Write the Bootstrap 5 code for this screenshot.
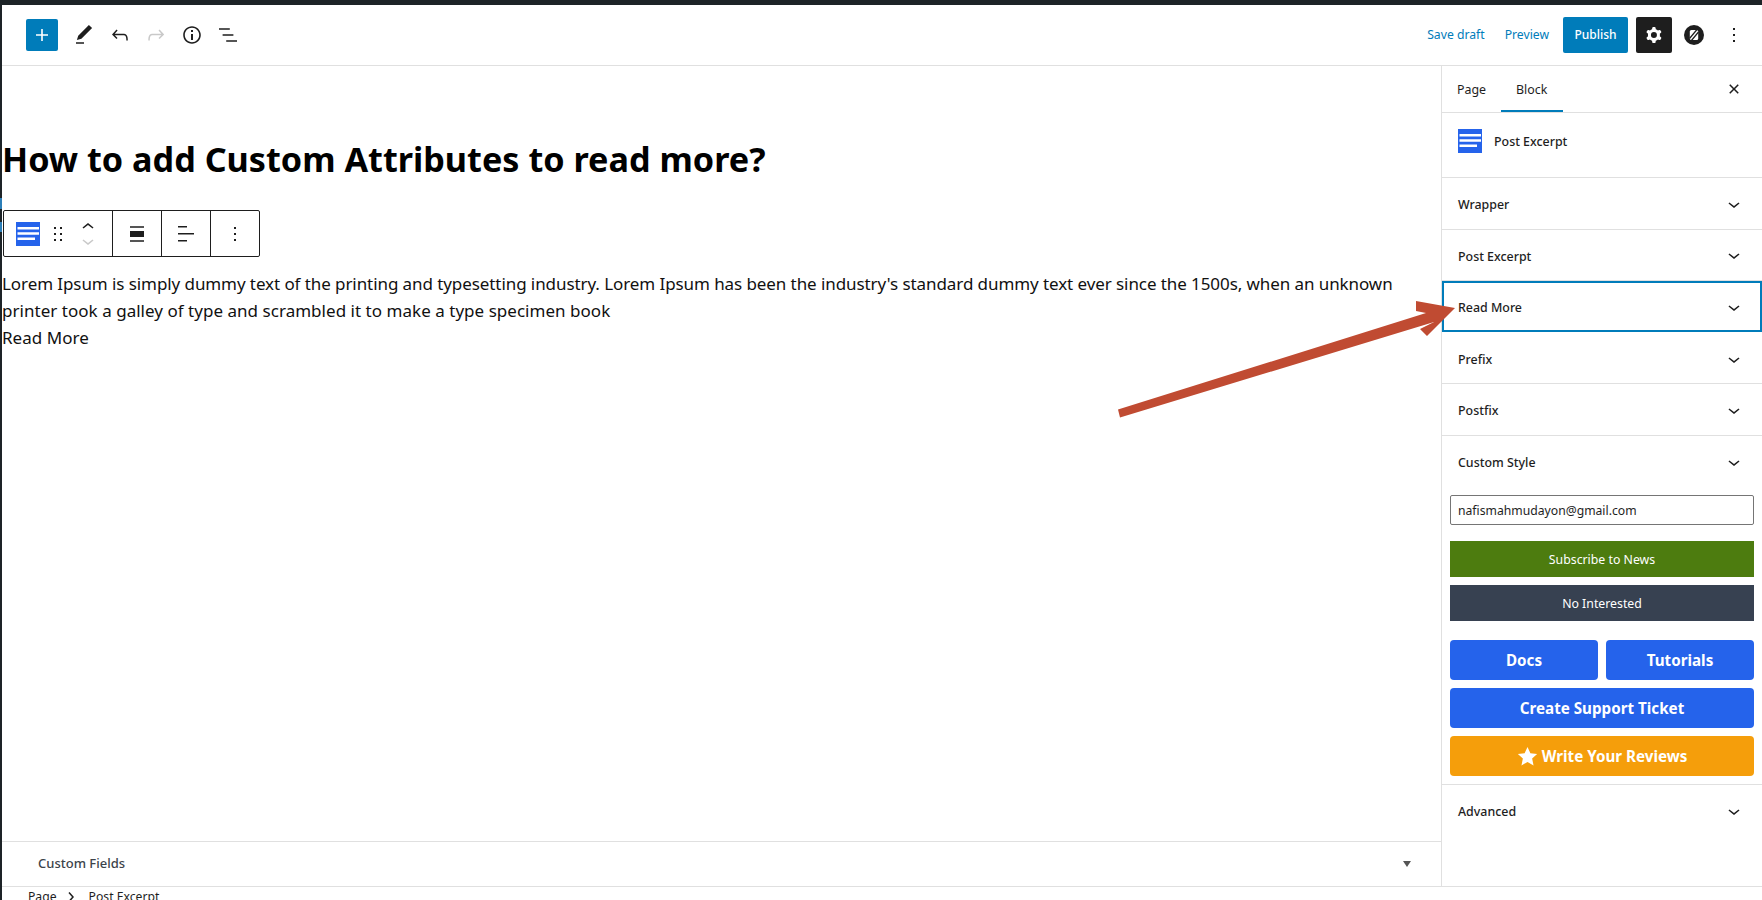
<!DOCTYPE html>
<html lang="en">
<head>
<meta charset="utf-8">
<title>Edit page</title>
<link href="https://cdn.jsdelivr.net/npm/bootstrap@5.3.0/dist/css/bootstrap.min.css" rel="stylesheet">
<style>
html,body{height:900px;overflow:hidden;background:#fff}
body{font-family:"Noto Sans",sans-serif;font-size:12.4px;color:#1e1e1e;position:relative}
svg{display:block;fill:currentColor;flex:none}
.shell{height:900px;border-top:5px solid #1d2327;border-left:2px solid #1d2327}
.topbar{height:61px;border-bottom:1px solid #e0e0e0;padding-left:24px;padding-right:10px;flex:none}
.addbtn{width:32px;height:32px;border-radius:2px;background:#007cba;color:#fff;margin-right:8px}
.tool{width:36px;height:36px;color:#1e1e1e}
.tool.off{color:#c9c9c9}
.savelink{color:#007cba;font-size:12.2px;text-decoration:none}
.previewlink{margin-left:20px}
.pubbtn{width:65px;height:36px;background:#007cba;color:#fff;border-radius:2px;font-size:12px;font-weight:500;padding:0;margin-left:14px;border:0}
.gearbtn{width:36px;height:36px;background:#1e1e1e;color:#fff;border-radius:2px;margin-left:8px}
.zoomico{width:44px;height:36px}
.mainrow{height:820px;flex:none}
.editor{flex:1 1 auto;min-width:0}
.canvas{flex:1 1 auto}
.ptitle{font-size:34.2px;font-weight:700;line-height:44px;color:#000;margin:0;padding:71px 0 0 0}
.blocktb{width:257px;height:47px;border:1px solid #1e1e1e;border-radius:2px;margin:29px 0 0 1px;background:#fff}
.tbgroup{height:100%;border-right:1px solid #1e1e1e}
.tbgroup:last-child{border-right:0}
.firstgroup{width:109px;padding-left:12px}
.narrowgroup{width:49px}
.dragico{margin-left:6px}
.moverstack{margin-left:6px}
.moverdown{color:#c9c9c9}
.excerpt{font-size:17px;letter-spacing:-.08px;line-height:27px;color:#111;margin:13px 0 0 0}
.secondline{letter-spacing:.03px}
.metabox{height:45px;border-top:1px solid #e0e0e0;padding:0 30px 0 36px;flex:none}
.metalabel{font-size:13px;font-weight:500;color:#3c434a}
.tri{width:0;height:0;border-left:4px solid transparent;border-right:4px solid transparent;border-top:6px solid #555}
.sidebar{width:321px;flex:none;border-left:1px solid #e0e0e0}
.tabrow{height:47px;border-bottom:1px solid #e0e0e0;padding-right:10px}
.tabitem{font-size:12.4px;height:46px;padding:2px 15px 0;color:#1e1e1e;display:flex;align-items:center}
.tabitem.sel{box-shadow:inset 0 -2px 0 #007cba;padding-right:16px}
.blockcard{height:65px;border-bottom:1px solid #e0e0e0;padding:16px 16px 0 16px}
.blockico{width:24px;height:24px;background:#2563eb;flex:none}
.blockname{font-size:12.4px;font-weight:500;line-height:24px;margin-left:12px;padding-top:1px}
.panelrow{height:51.6px;border-bottom:1px solid #e0e0e0;padding:1px 16px 0;font-size:12.4px;font-weight:500}
.panelrow.hit{box-shadow:inset 0 0 0 2px #007cba;border-bottom-color:transparent}
.rowlabel{padding-top:3px}
.panelbody{padding:8px 8px 8px 8px;border-bottom:1px solid #e0e0e0}
.mailbox{height:30px;border:1px solid #757575;border-radius:2px;font-size:12.2px;padding:3px 7px 0;display:flex;align-items:center;margin-top:-1px;margin-bottom:16px}
.subbtn{display:flex;align-items:center;justify-content:center;width:100%;height:36px;font-size:12.3px;color:#fff;border-radius:0;border:0;padding:3px 0 0}
.subbtn:hover{color:#fff}
.green,.green:hover{background:#4d7c0f;margin-bottom:8px}
.slate,.slate:hover{background:#374151;margin-bottom:19px}
.cta{display:flex;align-items:center;justify-content:center;height:40px;background:#2563eb;color:#fff;font-size:15.200px;font-weight:700;border-radius:4px;border:0;padding:2px 0 0;width:100%}
.cta:hover{background:#2563eb;color:#fff}
.amber,.amber:hover{background:#f59e0b}
.crumbs{height:15px;border-top:1px solid #e0e0e0;padding-left:26px;font-size:12.2px;line-height:20px;overflow:hidden;flex:none;background:#fff}
.crumbsep{margin:5px 10px 0 10px}
.arrow{position:absolute;left:0;top:0;width:1762px;height:900px;pointer-events:none}
.edgemark{position:absolute;left:0;width:2px;background:#2c7fb8}
.em1{top:198px;height:11px}
.em2{top:222px;height:10px}
</style>
</head>
<body>
<div class="shell d-flex flex-column">
  <header class="topbar d-flex align-items-center">
    <button class="addbtn btn p-0 d-flex align-items-center justify-content-center border-0" aria-label="Add"><svg width="24" height="24" viewBox="0 0 24 24"><path d="M18 11.2h-5.2V6h-1.600v5.200H6v1.600h5.200V18h1.600v-5.200H18z"/></svg></button>
    <div class="tool d-flex align-items-center justify-content-center"><svg width="24" height="24" viewBox="0 0 24 24"><path d="M20.100 5.100L16.900 2 6.200 12.700l-1.300 4.400 4.500-1.300L20.100 5.100zM4 20.800h8v-1.500H4v1.500z"/></svg></div>
    <div class="tool d-flex align-items-center justify-content-center"><svg width="24" height="24" viewBox="0 0 24 24"><path d="M18.300 11.700c-.6-.6-1.400-.9-2.300-.9H6.700l2.900-3.300-1.100-1-4.500 5L8.500 16l1-1-2.700-2.700H16c.5 0 .9.2 1.300.5 1 1 1 3.400 1 4.500v.3h1.500v-.2c0-1.500 0-4.300-1.500-5.700z"/></svg></div>
    <div class="tool off d-flex align-items-center justify-content-center"><svg width="24" height="24" viewBox="0 0 24 24"><path d="M15.600 6.500l-1.100 1 2.900 3.300H8c-.9 0-1.700.3-2.300.9-1.400 1.500-1.400 4.200-1.400 5.600v.2h1.500v-.3c0-1.100 0-3.500 1-4.500.3-.3.7-.5 1.300-.5h9.200L14.500 15l1.100 1.100 4.600-4.600-4.600-5z"/></svg></div>
    <div class="tool d-flex align-items-center justify-content-center"><svg width="24" height="24" viewBox="0 0 24 24"><path d="M12 3.200c-4.800 0-8.800 3.900-8.800 8.800 0 4.800 3.900 8.800 8.800 8.800 4.800 0 8.800-3.900 8.800-8.800 0-4.800-4-8.800-8.800-8.800zm0 16c-4 0-7.200-3.300-7.200-7.200C4.800 8 8 4.800 12 4.800s7.200 3.300 7.200 7.200c0 4-3.200 7.200-7.200 7.200zM11 17h2v-6h-2v6zm0-8h2V7h-2v2z"/></svg></div>
    <div class="tool d-flex align-items-center justify-content-center"><svg width="24" height="24" viewBox="0 0 24 24"><path d="M13.800 5.200H3v1.500h10.800V5.200zm-3.600 12v1.500H21v-1.500H10.200zm7.200-6H6.600v1.500h10.800v-1.500z"/></svg></div>
    <div class="ms-auto d-flex align-items-center">
      <a class="savelink" href="#">Save draft</a>
      <a class="savelink previewlink" href="#">Preview</a>
      <button class="pubbtn btn">Publish</button>
      <div class="gearbtn d-flex align-items-center justify-content-center"><svg width="24" height="24" viewBox="0 0 24 24"><path fill-rule="evenodd" d="M10.289 4.836A1 1 0 0111.275 4h1.306a1 1 0 01.987.836l.244 1.466c.787.26 1.503.679 2.108 1.218l1.393-.522a1 1 0 011.216.437l.653 1.130a1 1 0 01-.23 1.273l-1.148.944a6.025 6.025 0 010 2.435l1.149.946a1 1 0 01.23 1.272l-.653 1.130a1 1 0 01-1.216.437l-1.394-.522c-.605.54-1.320.958-2.108 1.218l-.244 1.466a1 1 0 01-.987.836h-1.306a1 1 0 01-.986-.836l-.244-1.466a5.995 5.995 0 01-2.108-1.218l-1.394.522a1 1 0 01-1.216-.436l-.653-1.131a1 1 0 01.23-1.272l1.149-.946a6.026 6.026 0 010-2.435l-1.148-.944a1 1 0 01-.23-1.272l.653-1.131a1 1 0 011.216-.437l1.393.522a5.994 5.994 0 012.108-1.218l.244-1.466zM14.929 12a3 3 0 11-6 0 3 3 0 016 0z"/></svg></div>
      <div class="zoomico d-flex align-items-center justify-content-center"><svg width="20" height="20" viewBox="0 0 20 20"><circle cx="10" cy="10" r="10" fill="#1e1e1e"/><rect x="5.800" y="5" width="8.400" height="10" rx="1.500" fill="#fff"/><path d="M5.500 13.500L13 4.500M7 16L14.500 7" stroke="#1e1e1e" stroke-width="1.200" fill="none"/></svg></div>
      <div class="tool d-flex align-items-center justify-content-center"><svg width="24" height="24" viewBox="0 0 24 24"><path d="M13 19h-2v-2h2v2zm0-6h-2v-2h2v2zm0-6h-2V5h2v2z"/></svg></div>
    </div>
  </header>
  <div class="mainrow d-flex">
    <main class="editor d-flex flex-column">
      <div class="canvas">
        <h1 class="ptitle">How to add Custom Attributes to read more?</h1>
        <div class="blocktb d-flex">
          <div class="tbgroup firstgroup d-flex align-items-center">
            <div class="blockico"><svg width="24" height="24" viewBox="0 0 24 24"><path fill="#fff" d="M1.500 5h21.500v2.500H1.500zM1.500 10.300h21.500v2.500H1.500zM1.500 15.500h17.500v2.500H1.500z"/></svg></div>
            <svg class="dragico" width="24" height="24" viewBox="0 0 24 24"><path d="M8 7h2V5H8v2zm0 6h2v-2H8v2zm0 6h2v-2H8v2zm6-14v2h2V5h-2zm0 8h2v-2h-2v2zm0 6h2v-2h-2v2z"/></svg>
            <div class="moverstack d-flex flex-column">
              <svg width="24" height="16" viewBox="0 3 24 16"><path d="M6.500 12.400L12 8l5.500 4.400-.9 1.200L12 10l-4.500 3.600-1-1.200z"/></svg>
              <svg width="24" height="16" viewBox="0 5 24 16" class="moverdown"><path d="M17.500 11.600L12 16l-5.500-4.400.9-1.200L12 14l4.500-3.600 1 1.200z"/></svg>
            </div>
          </div>
          <div class="tbgroup narrowgroup d-flex align-items-center justify-content-center"><svg width="24" height="24" viewBox="0 0 24 24"><path d="M5 15h14V9H5v6zm0 4.800h14v-1.500H5v1.500zM5 4.200v1.500h14V4.200H5z"/></svg></div>
          <div class="tbgroup narrowgroup d-flex align-items-center justify-content-center"><svg width="24" height="24" viewBox="0 0 24 24"><path d="M13 5.500H4V4h9v1.500Zm7 7H4V11h16v1.500Zm-7 7H4V18h9v1.500Z"/></svg></div>
          <div class="tbgroup d-flex align-items-center justify-content-center flex-grow-1"><svg width="24" height="24" viewBox="0 0 24 24"><path d="M13 19h-2v-2h2v2zm0-6h-2v-2h2v2zm0-6h-2V5h2v2z"/></svg></div>
        </div>
        <p class="excerpt">Lorem Ipsum is simply dummy text of the printing and typesetting industry. Lorem Ipsum has been the industry's standard dummy text ever since the 1500s, when an unknown<br><span class="secondline">printer took a galley of type and scrambled it to make a type specimen book</span><br><span class="secondline">Read More</span></p>
      </div>
      <div class="metabox d-flex align-items-center justify-content-between">
        <span class="metalabel">Custom Fields</span>
        <span class="tri"></span>
      </div>
    </main>
    <aside class="sidebar">
      <div class="tabrow d-flex align-items-center">
        <div class="tabitem">Page</div>
        <div class="tabitem sel">Block</div>
        <div class="ms-auto tool d-flex align-items-center justify-content-center"><svg width="24" height="24" viewBox="0 0 24 24"><path d="M12 13.060l3.712 3.713 1.061-1.060L13.061 12l3.712-3.712-1.060-1.060L12 10.938 8.288 7.227l-1.061 1.060L10.939 12l-3.712 3.712 1.060 1.061L12 13.061z"/></svg></div>
      </div>
      <div class="blockcard d-flex">
        <div class="blockico"><svg width="24" height="24" viewBox="0 0 24 24"><path fill="#fff" d="M1.500 5h21.500v2.500H1.500zM1.500 10.300h21.500v2.500H1.500zM1.500 15.500h17.500v2.500H1.500z"/></svg></div>
        <div class="blockname">Post Excerpt</div>
      </div>
      <div class="panelrow d-flex align-items-center justify-content-between"><span class="rowlabel">Wrapper</span><svg width="24" height="24" viewBox="0 0 24 24"><path d="M17.500 11.600L12 16l-5.500-4.400.9-1.200L12 14l4.500-3.600 1 1.200z"/></svg></div>
      <div class="panelrow d-flex align-items-center justify-content-between"><span class="rowlabel">Post Excerpt</span><svg width="24" height="24" viewBox="0 0 24 24"><path d="M17.500 11.600L12 16l-5.500-4.400.9-1.200L12 14l4.500-3.600 1 1.200z"/></svg></div>
      <div class="panelrow hit d-flex align-items-center justify-content-between"><span class="rowlabel">Read More</span><svg width="24" height="24" viewBox="0 0 24 24"><path d="M17.500 11.600L12 16l-5.500-4.400.9-1.200L12 14l4.500-3.600 1 1.200z"/></svg></div>
      <div class="panelrow d-flex align-items-center justify-content-between"><span class="rowlabel">Prefix</span><svg width="24" height="24" viewBox="0 0 24 24"><path d="M17.500 11.600L12 16l-5.500-4.400.9-1.200L12 14l4.500-3.600 1 1.200z"/></svg></div>
      <div class="panelrow d-flex align-items-center justify-content-between"><span class="rowlabel">Postfix</span><svg width="24" height="24" viewBox="0 0 24 24"><path d="M17.500 11.600L12 16l-5.500-4.400.9-1.200L12 14l4.500-3.600 1 1.200z"/></svg></div>
      <div class="panelrow d-flex align-items-center justify-content-between border-bottom-0"><span class="rowlabel">Custom Style</span><svg width="24" height="24" viewBox="0 0 24 24"><path d="M17.500 11.600L12 16l-5.500-4.400.9-1.200L12 14l4.500-3.600 1 1.200z"/></svg></div>
      <div class="panelbody">
        <div class="mailbox">nafismahmudayon@gmail.com</div>
        <button class="subbtn btn green">Subscribe to News</button>
        <button class="subbtn btn slate">No Interested</button>
        <div class="d-flex flex-column gap-2">
          <div class="d-flex gap-2"><a href="#" class="cta btn">Docs</a><a href="#" class="cta btn">Tutorials</a></div>
          <a href="#" class="cta btn">Create Support Ticket</a>
          <a href="#" class="cta btn amber"><svg width="21" height="21" viewBox="0 0 24 24" class="me-1"><path d="M12 1l3.300 7.300 7.700.8-5.700 5.300 1.600 7.800L12 18.300l-6.900 3.900 1.600-7.800L1 9.100l7.700-.8z"/></svg>Write Your Reviews</a>
        </div>
      </div>
      <div class="panelrow d-flex align-items-center justify-content-between border-bottom-0"><span class="rowlabel">Advanced</span><svg width="24" height="24" viewBox="0 0 24 24"><path d="M17.500 11.600L12 16l-5.500-4.400.9-1.200L12 14l4.500-3.600 1 1.200z"/></svg></div>
    </aside>
  </div>
  <div class="crumbs d-flex"><span>Page</span><svg class="crumbsep" width="8" height="10" viewBox="0 0 8 10"><path d="M2 0.500L6 5 2 9.500" fill="none" stroke="#1e1e1e" stroke-width="1.500"/></svg><span class="ms-1">Post Excerpt</span></div>
</div>
<span class="edgemark em1"></span><span class="edgemark em2"></span>
<svg class="arrow" viewBox="0 0 1762 900"><path fill="#c04b32" d="M1118 409.500L1426 313 1416 311 1416 301 1455 308 1427 336 1420 329 1434 322 1120 417.500z"/></svg>
</body>
</html>
